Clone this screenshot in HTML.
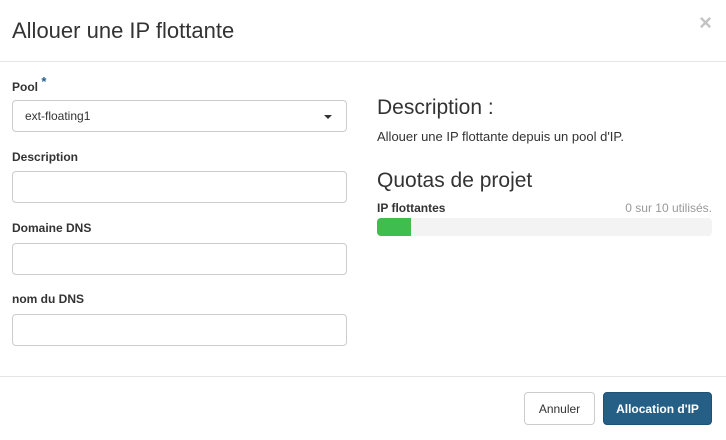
<!DOCTYPE html>
<html><head><meta charset="utf-8"><style>
*{box-sizing:border-box;margin:0;padding:0}
body{width:726px;height:440px;background:#fff;font-family:"Liberation Sans",sans-serif;color:#333;position:relative;overflow:hidden}
.abs{position:absolute}
.title{left:12px;top:18px;font-size:22px;color:#333}
.close{right:14px;top:10px;font-size:22px;color:#c4c4c4;font-weight:bold}
.hr{left:0;width:726px;height:1px;background:#e5e5e5}
label{position:absolute;left:12px;font-size:12px;font-weight:bold;color:#333}
.inp{position:absolute;left:12px;width:335px;height:32px;border:1px solid #ccc;border-radius:4px;background:#fff}
.h{font-size:21px;color:#333;left:377px}
.btn{position:absolute;top:392px;height:33px;border-radius:4px;font-size:12px;display:flex;align-items:center;justify-content:center}
</style></head><body>
<div class="abs title">Allouer une IP flottante</div>
<div class="abs close">×</div>
<div class="abs hr" style="top:61px"></div>
<label style="top:79px">Pool <span style="color:#245d8b;font-size:13px;position:relative;top:-5px">*</span></label>
<div class="inp" style="top:100px"><span style="position:absolute;left:12px;top:8px;font-size:12px;color:#333">ext-floating1</span><span style="position:absolute;right:14px;top:14px;border-left:4px solid transparent;border-right:4px solid transparent;border-top:4px solid #333"></span></div>
<label style="top:150px">Description</label>
<div class="inp" style="top:171px"></div>
<label style="top:221px">Domaine DNS</label>
<div class="inp" style="top:243px"></div>
<label style="top:292px">nom du DNS</label>
<div class="inp" style="top:314px"></div>
<div class="abs h" style="top:96px">Description :</div>
<div class="abs" style="left:377px;top:129px;font-size:13px">Allouer une IP flottante depuis un pool d'IP.</div>
<div class="abs h" style="top:169px">Quotas de projet</div>
<div class="abs" style="left:377px;top:201px;font-size:12px;font-weight:bold">IP flottantes</div>
<div class="abs" style="right:14px;top:201px;font-size:12px;color:#999">0 sur 10 utilisés.</div>
<div class="abs" style="left:377px;top:218px;width:335px;height:18px;background:#f3f3f3;border-radius:4px;overflow:hidden"><div style="width:34px;height:18px;background:#3fbe4f"></div></div>
<div class="abs hr" style="top:376px"></div>
<div class="btn" style="left:524px;width:71px;border:1px solid #ccc;color:#333">Annuler</div>
<div class="btn" style="left:603px;width:109px;background:#265f86;color:#fff;font-weight:bold;border:1px solid #1f5175">Allocation d'IP</div>
</body></html>
